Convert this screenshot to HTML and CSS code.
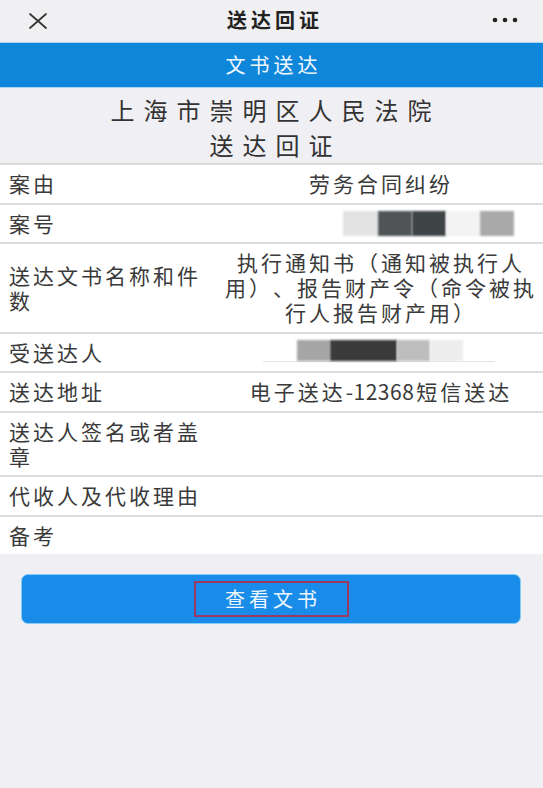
FILE: index.html
```html
<!DOCTYPE html>
<html lang="zh-CN">
<head>
<meta charset="utf-8">
<title>送达回证</title>
<link rel="stylesheet" href="styles.css">
</head>
<body>
<div class="page">
  <header class="topbar">
    <span class="close">
      <svg width="20" height="16" viewBox="0 0 20 16"><path d="M2 1 L18 15 M18 1 L2 15" stroke="#333" stroke-width="1.7" fill="none" stroke-linecap="round"/></svg>
    </span>
    <span class="topbar-title">送达回证</span>
    <span class="more">
      <svg width="26" height="6" viewBox="0 0 26 6"><circle cx="3" cy="3" r="2.3" fill="#222"/><circle cx="13" cy="3" r="2.3" fill="#222"/><circle cx="23" cy="3" r="2.3" fill="#222"/></svg>
    </span>
  </header>

  <div class="bluebar">文书送达</div>

  <div class="doc-title">
    <div>上海市崇明区人民法院</div>
    <div>送达回证</div>
  </div>

  <div class="table">
    <div class="row">
      <div class="label">案由</div>
      <div class="value">劳务合同纠纷</div>
    </div>
    <div class="row">
      <div class="label">案号</div>
      <div class="value value-left">
        <div class="redact redact-case">
          <span class="blk b1"></span><span class="blk b2"></span><span class="blk b3"></span><span class="blk b4"></span><span class="blk b5"></span>
        </div>
      </div>
    </div>
    <div class="row">
      <div class="label">送达文书名称和件数</div>
      <div class="value">执行通知书（通知被执行人用）、报告财产令（命令被执行人报告财产用）</div>
    </div>
    <div class="row">
      <div class="label">受送达人</div>
      <div class="value value-left">
        <div class="redact redact-name">
          <span class="blk c1"></span><span class="blk c2"></span><span class="blk c3"></span><span class="blk c4"></span>
        </div>
      </div>
    </div>
    <div class="row">
      <div class="label">送达地址</div>
      <div class="value">电子送达<span class="latin">-12368</span>短信送达</div>
    </div>
    <div class="row">
      <div class="label">送达人签名或者盖章</div>
      <div class="value"></div>
    </div>
    <div class="row">
      <div class="label">代收人及代收理由</div>
      <div class="value"></div>
    </div>
    <div class="row last">
      <div class="label">备考</div>
      <div class="value"></div>
    </div>
  </div>

  <div class="actions">
    <button class="btn"><span class="btn-inner">查看文书</span></button>
  </div>
</div>
</body>
</html>
```

FILE: styles.css
```css
* { box-sizing: border-box; }

html, body {
  margin: 0;
  padding: 0;
  background: #efeff4;
}

body {
  font-family: "Noto Sans CJK SC", "Noto Sans", sans-serif;
  color: #3a3a3a;
  text-spacing-trim: space-all;
}

.page {
  width: 543px;
  min-height: 788px;
  background: #efeff4;
}

.topbar {
  height: 42px;
  display: grid;
  grid-template-columns: 1fr auto 1fr;
  align-items: center;
  padding: 0 25px 0 28px;
  background: #f0f0f2;
}

.close {
  justify-self: start;
  display: flex;
  margin-top: -1px;
}

.more {
  justify-self: end;
  display: flex;
  margin-top: -2px;
}

.topbar-title {
  font-size: 20px;
  font-weight: 700;
  letter-spacing: 4px;
  padding-left: 4px;
  color: #222;
  line-height: 42px;
  margin-top: -3px;
}

.bluebar {
  height: 46px;
  border-top: 1px solid #a9d8f4;
  border-bottom: 1px solid #a9d8f4;
  background: #0e87db;
  color: #f2f8ff;
  font-size: 20px;
  letter-spacing: 4px;
  padding-left: 4px;
  text-align: center;
  line-height: 43px;
}

.doc-title {
  padding: 4px 0 1px 8px;
  text-align: center;
  font-size: 24px;
  line-height: 35px;
  letter-spacing: 9px;
  color: #333;
  background: #f0eff4;
}

.table {
  border-top: 2px solid #dcdcdc;
  background: #fff;
}

.row {
  display: flex;
  align-items: center;
  border-bottom: 2px solid #dcdcdc;
  font-size: 21px;
  line-height: 25px;
  letter-spacing: 3px;
}

.row.last {
  border-bottom: none;
}

.label {
  width: 215px;
  flex: none;
  padding: 6px 0 6.5px 9px;
  color: #3a3a3a;
}

.value {
  flex: 1;
  padding: 6px 2px 6.5px 6px;
  text-align: center;
  color: #3a3a3a;
  min-height: 37.5px;
}

.value-left {
  text-align: left;
  padding-left: 0;
}

.latin {
  letter-spacing: 0.5px;
  margin-right: 2px;
}

.redact {
  display: flex;
  height: 25px;
}

.redact-case {
  margin-left: 128px;
}

.redact-name {
  margin-left: 48px;
  width: 232px;
  height: 22px;
  padding-left: 34px;
  border-bottom: 1px solid #e4e4e4;
}

.blk {
  display: block;
  height: 100%;
  filter: blur(1.2px);
}

.b1 { width: 35px; background: #e3e3e3; }
.b2 { width: 34px; background: #505456; }
.b3 { width: 34px; background: #3f4446; }
.b4 { width: 34px; background: #f3f3f3; }
.b5 { width: 34px; background: #a9a9a9; }

.c1 { width: 33px; background: #a6a6a6; }
.c2 { width: 67px; background: #3a3a3a; }
.c3 { width: 33px; background: #bdbdbd; }
.c4 { width: 33px; background: #ededed; }

.actions {
  padding: 20px 22px 0 21px;
}

.btn {
  width: 100%;
  height: 50px;
  border: 1px solid #86cdf7;
  border-radius: 7px;
  background: #188ce8;
  display: flex;
  align-items: center;
  justify-content: center;
  padding: 0;
  font-family: inherit;
}

.btn-inner {
  width: 155px;
  height: 36px;
  border: 2px solid #9a3a62;
  color: #eef7ff;
  font-size: 20px;
  letter-spacing: 4px;
  padding-left: 4px;
  line-height: 31px;
  text-align: center;
}
```
